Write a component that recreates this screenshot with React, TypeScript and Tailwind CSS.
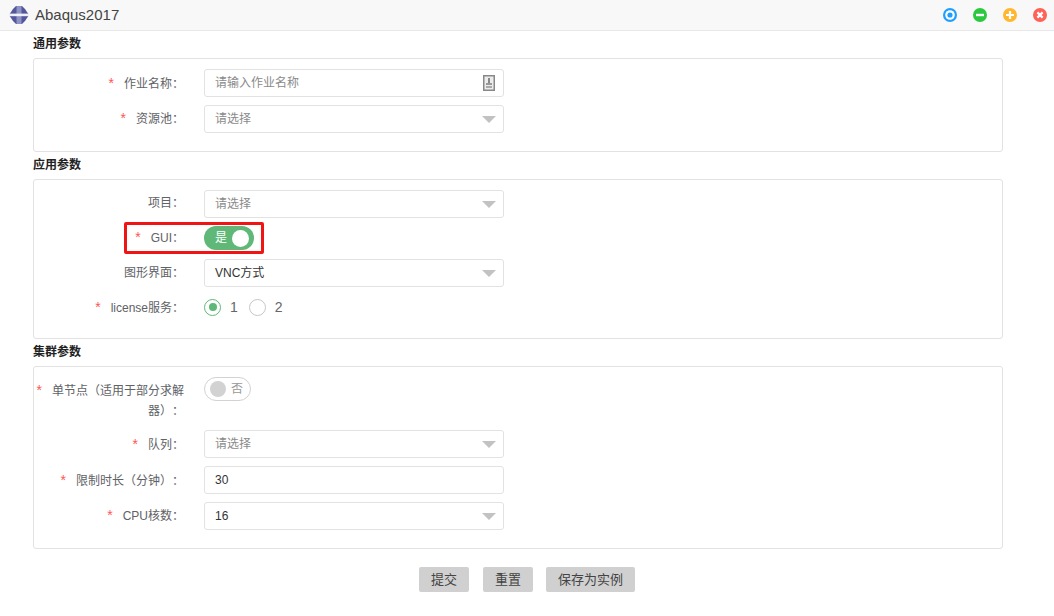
import type { ReactNode } from "react";

const font = "font-['Liberation_Sans','Noto_Sans_CJK_SC',sans-serif] [text-spacing-trim:space-all]";

function Logo() {
  return (
    <svg viewBox="0 0 20 20" className="h-5 w-5">
      <path d="M7 1 H13 L16 4 L20 10 L16 16 L13 19 H7 L4 16 L0 10 L4 4 Z" fill="#52569a" />
      <path d="M7.5 1 H12.5 V19 H7.5 Z" fill="#8f92c4" />
      <rect x="0" y="8.6" width="20" height="2.6" fill="#eef0f8" />
    </svg>
  );
}

function WindowButtons() {
  return (
    <div className="flex items-center gap-[16px]">
      <svg viewBox="0 0 14 14" className="h-[14px] w-[14px]">
        <circle cx="7" cy="7" r="7" fill="#1e9fff" />
        <circle cx="7" cy="7" r="4.8" fill="#fff" />
        <circle cx="7" cy="7" r="2.6" fill="#1e9fff" />
      </svg>
      <svg viewBox="0 0 14 14" className="h-[14px] w-[14px]">
        <circle cx="7" cy="7" r="7" fill="#2bc840" />
        <rect x="3" y="5.8" width="8" height="2.4" fill="#fff" />
      </svg>
      <svg viewBox="0 0 14 14" className="h-[14px] w-[14px]">
        <circle cx="7" cy="7" r="7" fill="#ffb82e" />
        <path d="M3 7 H11 M7 3 V11" stroke="#fff" strokeWidth="2.2" />
      </svg>
      <svg viewBox="0 0 14 14" className="h-[14px] w-[14px]">
        <circle cx="7" cy="7" r="7" fill="#ff6057" />
        <path d="M4.4 4.4 L9.6 9.6 M9.6 4.4 L4.4 9.6" stroke="#fff" strokeWidth="2.2" />
      </svg>
    </div>
  );
}

function Star() {
  return <span className="mr-[10px] text-[14px] leading-none text-[#f55]">*</span>;
}

function Row({
  label,
  required,
  className,
  labelClass = "pt-[6px]",
  children,
}: {
  label: string;
  required?: boolean;
  className?: string;
  labelClass?: string;
  children: ReactNode;
}) {
  return (
    <div className={`flex items-start ${className ?? ""}`}>
      <div className={`w-[150px] text-right text-[12px] leading-[18px] text-[#606266] ${labelClass}`}>
        {required && <Star />}
        {label}
      </div>
      <div className="ml-[20px]">{children}</div>
    </div>
  );
}

function TextBox({ value, placeholder, icon }: { value?: string; placeholder?: string; icon?: boolean }) {
  return (
    <div className="flex h-[28px] w-[300px] items-center justify-between rounded-[3px] border border-[#e2e2e2] bg-white pl-[10px] pr-[8px] text-[12px]">
      <span className={value ? "text-[#333]" : "text-[#8a8a8a]"}>{value ?? placeholder}</span>
      {icon && (
        <svg viewBox="0 0 12 16" className="h-[16px] w-[12px]">
          <rect x="0.75" y="0.75" width="10.5" height="14.5" fill="#ececec" stroke="#888" strokeWidth="1.5" />
          <rect x="5" y="3" width="2" height="5" fill="#888" />
          <rect x="3" y="8" width="6" height="2" fill="#999" />
          <rect x="3" y="11" width="6" height="2" fill="#aaa" />
        </svg>
      )}
    </div>
  );
}

function SelectBox({ value }: { value?: string }) {
  return (
    <div className="flex h-[28px] w-[300px] items-center justify-between rounded-[3px] border border-[#e2e2e2] bg-white pl-[10px] pr-[7px] text-[12px]">
      <span className={value ? "text-[#333]" : "text-[#8a8a8a]"}>{value ?? "请选择"}</span>
      <svg viewBox="0 0 14 7" className="h-[7px] w-[14px]">
        <path d="M0 0 H14 L7 7 Z" fill="#c2c2c2" />
      </svg>
    </div>
  );
}

function Radio({ checked, label }: { checked?: boolean; label: string }) {
  return (
    <div className="flex items-center gap-[9px] text-[14px] text-[#666]">
      <span
        className={`flex h-[17px] w-[17px] items-center justify-center rounded-full border-[1.5px] ${
          checked ? "border-[#5fb878]" : "border-[#c6c6c6]"
        }`}
      >
        {checked && <span className="h-[8px] w-[8px] rounded-full bg-[#5fb878]" />}
      </span>
      {label}
    </div>
  );
}

function Section({ title, className, children }: { title: string; className: string; children: ReactNode }) {
  return (
    <section className="ml-[33px] w-[970px]">
      <h3 className="h-[14px] text-[12px] font-bold leading-[14px] text-[#222]">{title}</h3>
      <div className={`mt-[7px] rounded-[3px] border border-[#e2e2e2] ${className}`}>{children}</div>
    </section>
  );
}

export default function App() {
  return (
    <div className={`h-[616px] w-[1054px] overflow-hidden bg-white ${font}`}>
      <header className="flex h-[31px] items-center justify-between border-b border-[#e8e8e8] bg-[#f8f8f8] pl-[9px] pr-[7px]">
        <div className="flex items-center gap-[6px] text-[15px] text-[#444]">
          <Logo />
          Abaqus2017
        </div>
        <WindowButtons />
      </header>

      <div className="pt-[6px]">
        <Section title="通用参数" className="h-[94px] pt-[10px]">
          <Row label="作业名称：" required>
            <TextBox placeholder="请输入作业名称" icon />
          </Row>
          <Row label="资源池：" required className="mt-[8px]" labelClass="pt-[5px]">
            <SelectBox />
          </Row>
        </Section>

        <div className="h-[6px]" />
        <Section title="应用参数" className="h-[160px] pt-[10px]">
          <Row label="项目：" labelClass="pt-[4px]">
            <SelectBox />
          </Row>
          <div className="relative mt-[8px] h-[24px]">
            <div className="flex items-center">
              <div className="w-[150px] text-right text-[12px] leading-[24px] text-[#606266]">
                <Star />
                GUI：
              </div>
              <div className="ml-[20px] flex h-[24px] w-[50px] items-center justify-between rounded-full bg-[#5fb878] pl-[11px] pr-[5px] text-[12px] text-white">
                是<span className="h-[17px] w-[17px] rounded-full bg-white" />
              </div>
            </div>
            <div className="absolute left-[90px] top-[-4px] h-[32px] w-[140px] rounded-[2px] border-[3px] border-[#f01414]" />
          </div>
          <Row label="图形界面：" className="mt-[9px]" labelClass="pt-[5px]">
            <SelectBox value="VNC方式" />
          </Row>
          <Row label="license服务：" required className="mt-[6px]">
            <div className="flex h-[28px] items-center gap-[11px]">
              <Radio checked label="1" />
              <Radio label="2" />
            </div>
          </Row>
        </Section>

        <div className="h-[6px]" />
        <Section title="集群参数" className="h-[183px] pt-[10px]">
          <div className="flex items-start">
            <div className="w-[150px] pt-[4px] text-right text-[12px] leading-[20px] text-[#606266]">
              <Star />
              单节点（适用于部分求解器）：
            </div>
            <div className="ml-[20px] flex h-[24px] w-[47px] items-center justify-between rounded-full border border-[#d2d2d2] bg-white pl-[5px] pr-[7px] text-[12px] text-[#999]">
              <span className="h-[16px] w-[16px] rounded-full bg-[#d2d2d2]" />否
            </div>
          </div>
          <Row label="队列：" required className="mt-[9px]">
            <SelectBox />
          </Row>
          <Row label="限制时长（分钟）：" required className="mt-[8px]">
            <TextBox value="30" />
          </Row>
          <Row label="CPU核数：" required className="mt-[8px]" labelClass="pt-[5px]">
            <SelectBox value="16" />
          </Row>
        </Section>

        <div className="mt-[18px] flex justify-center gap-[13px]">
          <button className="mr-[1px] h-[25px] w-[50px] rounded-[2px] bg-[#d0d0d0] text-[13px] text-[#444]">提交</button>
          <button className="h-[25px] w-[50px] rounded-[2px] bg-[#d0d0d0] text-[13px] text-[#444]">重置</button>
          <button className="h-[25px] w-[89px] rounded-[2px] bg-[#d0d0d0] text-[13px] text-[#444]">保存为实例</button>
        </div>
      </div>
    </div>
  );
}
